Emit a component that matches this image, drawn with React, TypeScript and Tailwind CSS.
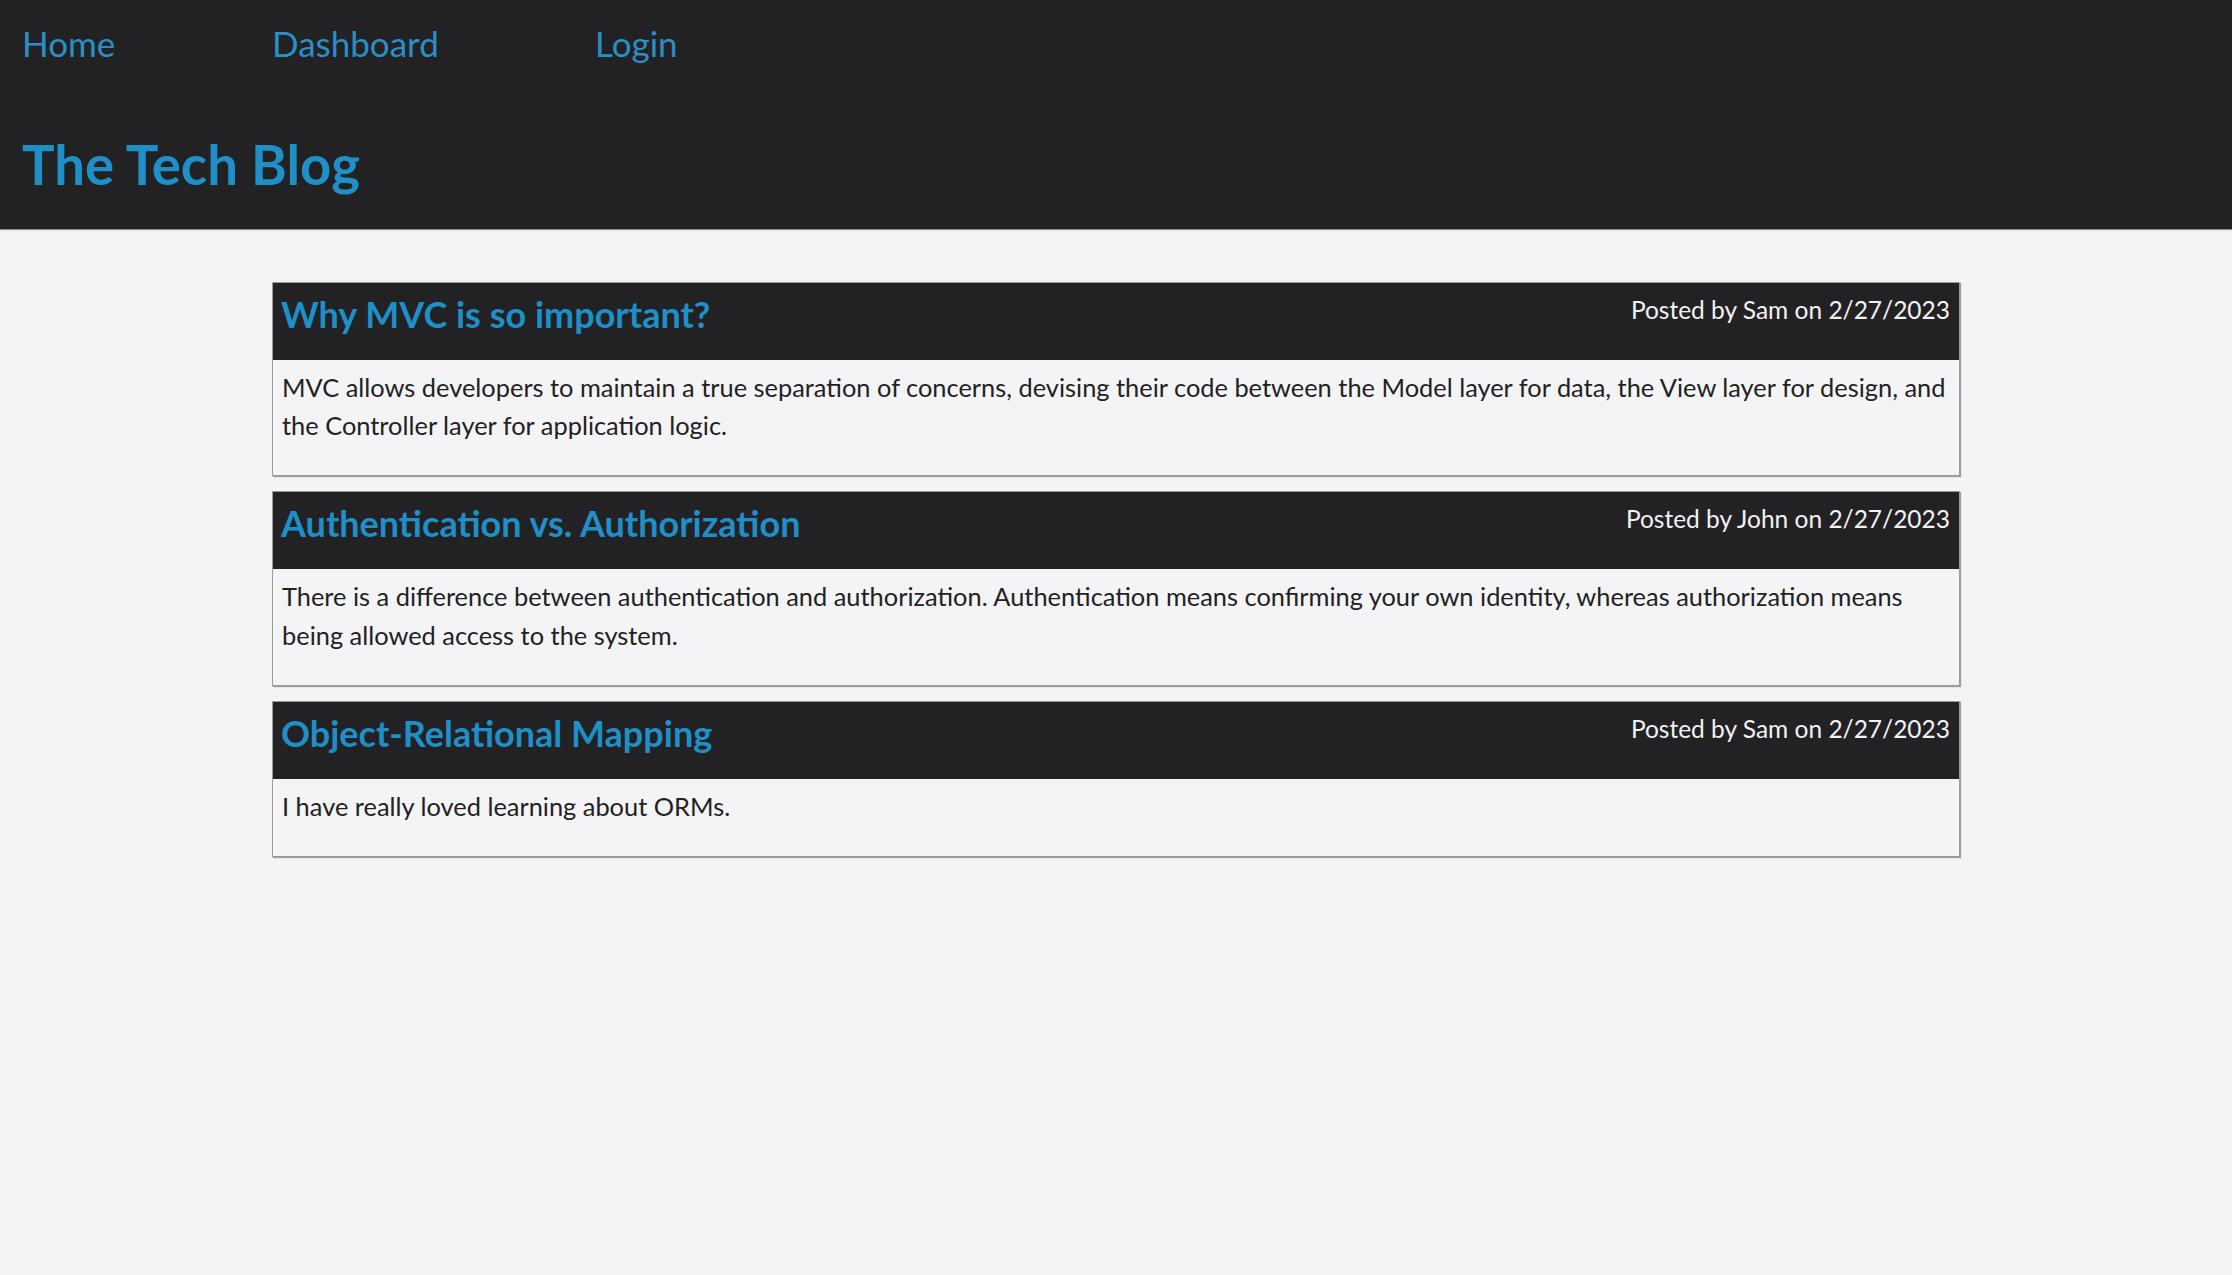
import React from "react";

type Post = { title: string; author: string; date: string; body: string };

const posts: Post[] = [
  {
    title: "Why MVC is so important?",
    author: "Sam",
    date: "2/27/2023",
    body: "MVC allows developers to maintain a true separation of concerns, devising their code between the Model layer for data, the View layer for design, and the Controller layer for application logic.",
  },
  {
    title: "Authentication vs. Authorization",
    author: "John",
    date: "2/27/2023",
    body: "There is a difference between authentication and authorization. Authentication means confirming your own identity, whereas authorization means being allowed access to the system.",
  },
  {
    title: "Object-Relational Mapping",
    author: "Sam",
    date: "2/27/2023",
    body: "I have really loved learning about ORMs.",
  },
];

function PostCard({ post }: { post: Post }) {
  return (
    <article className="border border-[#9a9a9a] bg-[#f4f4f6] shadow-[1px_1px_1px_rgba(0,0,0,0.35)]">
      <div className="flex h-[77px] items-start justify-between bg-[#222224] pl-[8px] pr-[9px] pt-[13px]">
        <h2 className="text-[36px] font-bold leading-[36px] text-[#1f8fc7]">{post.title}</h2>
        <p className="mt-[2px] text-[24.5px] leading-[24px] text-[#f2f2f2]">
          Posted by {post.author} on {post.date}
        </p>
      </div>
      <div className="px-[9px] pb-[30.5px] pt-[8px]">
        <p className="text-[25.4px] leading-[38.4px] text-[#222222]">{post.body}</p>
      </div>
    </article>
  );
}

export default function App() {
  return (
    <div className="min-h-screen bg-[#f4f4f6]" style={{ fontFamily: "Lato, 'Open Sans', sans-serif" }}>
      <header className="bg-[#222224] px-[22px] pb-[38px] pt-[26px] shadow-[0_1px_1px_rgba(0,0,0,0.4)]">
        <nav className="flex text-[35px] leading-[34px] text-[#2a8fc4]">
          <a href="#" className="w-[250px]">Home</a>
          <a href="#" className="w-[323px]">Dashboard</a>
          <a href="#">Login</a>
        </nav>
        <h1 className="mt-[78px] text-[54.5px] font-bold leading-[53px] text-[#1f8fc7]">The Tech Blog</h1>
      </header>
      <main className="mx-auto flex w-[1688px] flex-col gap-[15px] pt-[53px]">
        {posts.map((p) => (
          <PostCard key={p.title} post={p} />
        ))}
      </main>
    </div>
  );
}
